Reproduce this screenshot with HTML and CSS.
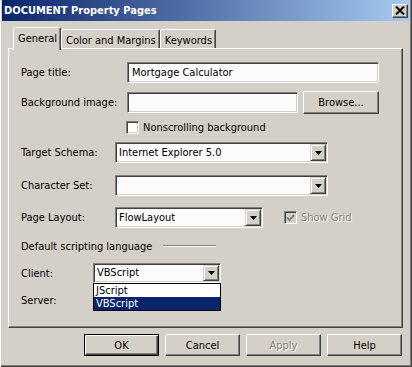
FILE: index.html
```html
<!DOCTYPE html>
<html lang="en">
<head>
    <meta charset="UTF-8">
    <title>DOCUMENT Property Pages</title>
    <link rel="stylesheet" href="styles.css">
</head>
<body>
    <div class="window">
        <div class="titlebar">
            <span class="title">DOCUMENT Property Pages</span>
            <span class="close-btn">
                <svg width="10" height="9" viewBox="0 0 10 9">
                    <path d="M1 0.5 L9 8.5 M9 0.5 L1 8.5" stroke="#000" stroke-width="2"/>
                </svg>
            </span>
        </div>

        <div class="dialog">
            <div class="tabs">
                <div class="tab active">General</div>
                <div class="tab">Color and Margins</div>
                <div class="tab">Keywords</div>
            </div>

            <div class="panel">
                <div class="row row-title">
                    <span class="lbl lbl-wide">Page title:</span>
                    <div class="field w-title">Mortgage Calculator</div>
                </div>

                <div class="row row-bg">
                    <span class="lbl lbl-wide">Background image:</span>
                    <div class="field w-bg"></div>
                    <span class="btn btn-browse">Browse...</span>
                </div>

                <div class="row row-check">
                    <span class="checkbox"></span>
                    <span class="check-text">Nonscrolling background</span>
                </div>

                <div class="row row-schema">
                    <span class="lbl">Target Schema:</span>
                    <div class="field combo w-schema">
                        <span class="combo-text">Internet Explorer 5.0</span>
                        <span class="combo-btn"><svg width="7" height="4" viewBox="0 0 7 4"><path d="M0 0 H7 L3.5 4 Z" fill="#000"/></svg></span>
                    </div>
                </div>

                <div class="row row-charset">
                    <span class="lbl">Character Set:</span>
                    <div class="field combo w-schema">
                        <span class="combo-text"></span>
                        <span class="combo-btn"><svg width="7" height="4" viewBox="0 0 7 4"><path d="M0 0 H7 L3.5 4 Z" fill="#000"/></svg></span>
                    </div>
                </div>

                <div class="row row-layout">
                    <span class="lbl">Page Layout:</span>
                    <div class="field combo w-layout">
                        <span class="combo-text">FlowLayout</span>
                        <span class="combo-btn"><svg width="7" height="4" viewBox="0 0 7 4"><path d="M0 0 H7 L3.5 4 Z" fill="#000"/></svg></span>
                    </div>
                    <span class="checkbox disabled">
                        <svg width="9" height="8" viewBox="0 0 9 8"><path d="M1 3.5 L3.5 6 L8 1" stroke="#808080" stroke-width="2" fill="none"/></svg>
                    </span>
                    <span class="check-text grayed">Show Grid</span>
                </div>

                <div class="row row-group">
                    <span class="group-title">Default scripting language</span>
                    <span class="sep"></span>
                </div>

                <div class="row row-client">
                    <span class="lbl lbl-narrow">Client:</span>
                    <div class="combo-wrap">
                        <div class="field combo w-client">
                            <span class="combo-text">VBScript</span>
                            <span class="combo-btn"><svg width="7" height="4" viewBox="0 0 7 4"><path d="M0 0 H7 L3.5 4 Z" fill="#000"/></svg></span>
                        </div>
                        <ul class="listbox">
                            <li>JScript</li>
                            <li class="selected">VBScript</li>
                        </ul>
                    </div>
                </div>

                <div class="row row-server">
                    <span class="lbl lbl-narrow">Server:</span>
                </div>
            </div>

            <div class="actions">
                <span class="btn btn-default">OK</span>
                <span class="btn">Cancel</span>
                <span class="btn grayed">Apply</span>
                <span class="btn">Help</span>
            </div>
        </div>
    </div>
</body>
</html>
```

FILE: styles.css
```css
body {
    margin: 0;
    font-family: 'DejaVu Sans Condensed', Tahoma, 'Liberation Sans', sans-serif;
    font-size: 11px;
    color: #000;
}

.window {
    width: 412px;
    height: 367px;
    box-sizing: border-box;
    padding: 0 2px 2px 2px;
    background: #d4d0c8;
    box-shadow: inset 1px 0 #fff, inset -1px -1px #404040, inset -2px -2px #808080;
}

.titlebar {
    height: 21px;
    display: flex;
    align-items: center;
    justify-content: space-between;
    padding: 0 2px 0 2px;
    background: linear-gradient(to right, #0a246a, #a6caf0);
}

.title {
    color: #fff;
    font-weight: bold;
    font-size: 11px;
}

.close-btn {
    width: 16px;
    height: 14px;
    box-sizing: border-box;
    display: flex;
    align-items: center;
    justify-content: center;
    background: #d4d0c8;
    border: 1px solid;
    border-color: #fff #404040 #404040 #fff;
    box-shadow: inset -1px -1px #808080;
}

.dialog {
    padding: 6px 7px 0 6px;
}

/* tab strip */
.tabs {
    display: flex;
    align-items: flex-end;
    padding-left: 5px;
    height: 21px;
}

.tab {
    height: 19px;
    box-sizing: border-box;
    padding: 4px 3px 0 4px;
    border: 1px solid;
    border-bottom: none;
    border-color: #fff #404040 transparent #fff;
    box-shadow: inset -1px 0 #808080;
    border-radius: 2px 2px 0 0;
    background: #d4d0c8;
}

.tab.active {
    position: relative;
    z-index: 1;
    height: 23px;
    margin-bottom: -2px;
    padding-top: 4px;
}

.panel {
    position: relative;
    height: 280px;
    box-sizing: border-box;
    padding: 13px 0 0 12px;
    border: 1px solid;
    border-color: #fff #404040 #404040 #fff;
    box-shadow: inset -1px -1px #808080;
}

.row {
    display: flex;
    align-items: center;
}

.row-bg { margin-top: 8px; }
.row-check { margin-top: 7px; padding-left: 105px; }
.row-schema { margin-top: 8px; }
.row-charset { margin-top: 12px; }
.row-layout { margin-top: 11px; }
.row-group { margin-top: 12px; height: 12px; }
.row-client { margin-top: 11px; }
.row-server { margin-top: 11px; }

.lbl { width: 94px; flex: none; }
.lbl-wide { width: 106px; }
.lbl-narrow { width: 72px; }

/* sunken edit box */
.field {
    height: 21px;
    box-sizing: border-box;
    padding: 0 4px;
    line-height: 19px;
    background: #fbfbfb;
    border: 1px solid;
    border-color: #808080 #fff #fff #808080;
    box-shadow: inset 1px 1px #404040, inset -1px -1px #d4d0c8;
}

.w-title { width: 252px; }
.w-bg { width: 171px; }
.w-schema { width: 213px; }
.w-layout { width: 148px; }
.w-client { width: 128px; height: 20px; }

.combo {
    display: flex;
    padding: 1px;
}

.combo-text {
    flex: 1;
    padding-left: 2px;
    line-height: 17px;
}

.w-client .combo-text { line-height: 16px; }

.combo-btn {
    width: 16px;
    box-sizing: border-box;
    display: flex;
    align-items: center;
    justify-content: center;
    background: #d4d0c8;
    border: 1px solid;
    border-color: #d4d0c8 #404040 #404040 #d4d0c8;
    box-shadow: inset 1px 1px #fff, inset -1px -1px #808080;
}

.checkbox {
    width: 13px;
    height: 13px;
    box-sizing: border-box;
    display: flex;
    align-items: center;
    justify-content: center;
    background: #fff;
    border: 1px solid;
    border-color: #808080 #fff #fff #808080;
    box-shadow: inset 1px 1px #404040, inset -1px -1px #d4d0c8;
}

.checkbox.disabled {
    margin-left: 21px;
    background: #d4d0c8;
}

.check-text { margin-left: 4px; }

.grayed {
    color: #808080;
    text-shadow: 1px 1px #fff;
}

.btn {
    display: flex;
    align-items: center;
    justify-content: center;
    box-sizing: border-box;
    width: 75px;
    height: 23px;
    background: #d4d0c8;
    border: 1px solid;
    border-color: #fff #404040 #404040 #fff;
    box-shadow: inset -1px -1px #808080;
}

.btn-browse {
    width: 76px;
    margin-left: 5px;
}

.btn-default {
    border-color: #000;
    box-shadow: inset 1px 1px #fff, inset -1px -1px #404040, inset -2px -2px #808080;
}

.group-title { width: 142px; }

.sep {
    width: 53px;
    height: 0;
    border-top: 1px solid #808080;
    border-bottom: 1px solid #fff;
}

.combo-wrap {
    position: relative;
}

.listbox {
    position: absolute;
    top: 100%;
    left: 0;
    width: 128px;
    box-sizing: border-box;
    margin: 0;
    padding: 0;
    list-style: none;
    background: #fff;
    border: 1px solid #000;
}

.listbox li {
    height: 13px;
    line-height: 13px;
    padding-left: 2px;
}

.listbox li.selected {
    background: #0a246a;
    color: #fff;
}

.actions {
    display: flex;
    justify-content: flex-end;
    gap: 6px;
    margin-top: 6px;
    padding-right: 1px;
}

.actions .btn {
    width: 75px;
    height: 22px;
}
```
